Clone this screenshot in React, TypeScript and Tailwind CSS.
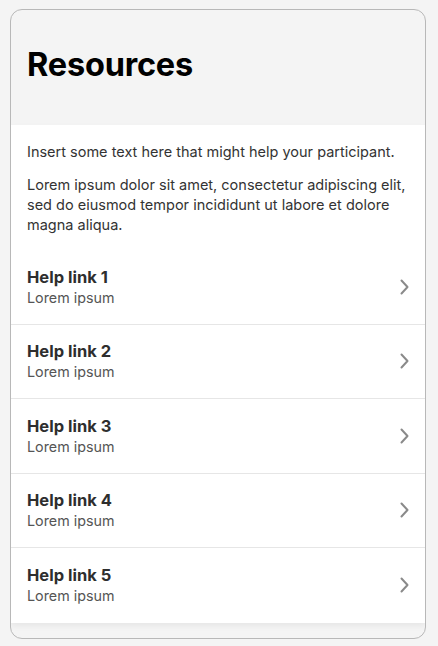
const links = [1, 2, 3, 4, 5].map((n) => ({ title: `Help link ${n}`, subtitle: "Lorem ipsum" }));

function Chevron() {
  return (
    <svg width="10" height="16" viewBox="0 0 10 16" fill="none" className="shrink-0">
      <path d="M2.5 1.5 L8.5 8 L2.5 14.5" stroke="#8a8a8a" strokeWidth="2" strokeLinecap="round" strokeLinejoin="round" />
    </svg>
  );
}

export default function App() {
  return (
    <div
      className="min-h-[646px] w-[438px] bg-[#f4f4f4] pl-[10px] pr-[12px] pt-[9px] pb-[7px]"
      style={{ fontFamily: "Inter, 'Noto Sans', sans-serif" }}
    >
      <div className="flex h-[630px] flex-col overflow-hidden rounded-[12px] border border-[#b8b8b8] bg-[#f4f4f4]">
        <div className="flex h-[115px] shrink-0 items-center px-4 pb-[5px]">
          <h1 className="text-[32.5px] font-bold tracking-[-0.2px] text-black">Resources</h1>
        </div>
        <div className="bg-white shadow-[0_3px_6px_rgba(0,0,0,0.06)]">
          <div className="px-4 pt-[17px] pb-[15px] text-[14.5px] leading-5 text-[#333]">
            <p>Insert some text here that might help your participant.</p>
            <p className="mt-[13px]">
              Lorem ipsum dolor sit amet, consectetur adipiscing elit, sed do eiusmod tempor incididunt ut labore et dolore magna aliqua.
            </p>
          </div>
          <ul>
            {links.map((l, i) => (
              <li
                key={l.title}
                className={`flex h-[74.5px] items-center justify-between pl-4 pr-[16px] ${i < links.length - 1 ? "border-b border-[#e6e6e6]" : ""}`}
              >
                <div className="flex flex-col pt-[1px]">
                  <span className="text-[16.5px] font-bold leading-[21px] text-[#2e2e2e]">{l.title}</span>
                  <span className="text-[14.3px] leading-5 text-[#555]">{l.subtitle}</span>
                </div>
                <Chevron />
              </li>
            ))}
          </ul>
        </div>
      </div>
    </div>
  );
}
